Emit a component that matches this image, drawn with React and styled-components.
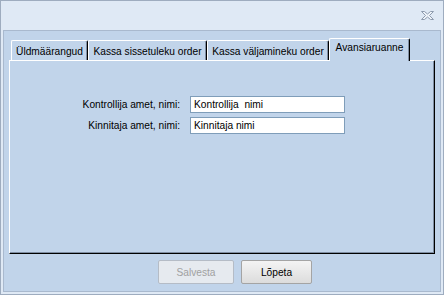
import React from 'react';
import styled, { createGlobalStyle } from 'styled-components';

const GlobalStyle = createGlobalStyle`
  html, body {
    margin: 0;
    padding: 0;
    background: #dfe9f5;
  }
  * {
    box-sizing: border-box;
  }
`;

const tabs = [
  { label: 'Üldmäärangud', width: 77 },
  { label: 'Kassa sissetuleku order', width: 119 },
  { label: 'Kassa väljamineku order', width: 122 },
  { label: 'Avansiaruanne', width: 81 },
];

const fields = [
  { label: 'Kontrollija amet, nimi:', value: 'Kontrollija  nimi' },
  { label: 'Kinnitaja amet, nimi:', value: 'Kinnitaja nimi' },
];

const Window = styled.div`
  width: 444px;
  height: 295px;
  border: 1px solid #9eacbf;
  background: #dfe9f5;
  display: flex;
  flex-direction: column;
  font-family: 'Liberation Sans', Arial, sans-serif;
  font-size: 10.2px;
  color: #000;
`;

const TitleBar = styled.div`
  height: 29px;
  display: flex;
  justify-content: flex-end;
  align-items: flex-start;
  padding: 10px 9px 0 0;
`;

const Client = styled.div`
  flex: 1;
  margin: 0 2px 2px;
  border: 1px solid #a9b9ce;
  background: #c1d4ea;
  padding: 7px 5px 0;
  display: flex;
  flex-direction: column;
`;

const TabRow = styled.div`
  display: flex;
  align-items: flex-end;
  height: 22px;
  padding-left: 2px;
  position: relative;
  z-index: 1;
`;

const Tab = styled.div`
  width: ${(p) => p.$width}px;
  height: ${(p) => (p.$active ? 23 : 20)}px;
  margin-bottom: ${(p) => (p.$active ? -1 : 0)}px;
  border-top: 1px solid #fff;
  border-left: 1px solid #fff;
  border-right: 1px solid #000;
  box-shadow: inset -1px 0 0 #7f8ea3;
  border-radius: 2px 2px 0 0;
  background: #c1d4ea;
  display: flex;
  align-items: ${(p) => (p.$active ? 'flex-start' : 'center')};
  justify-content: center;
  padding-top: ${(p) => (p.$active ? 3 : 1)}px;
  white-space: nowrap;
`;

const Panel = styled.div`
  height: 194px;
  border-top: 1px solid #fff;
  border-left: 1px solid #fff;
  border-right: 1px solid #000;
  border-bottom: 1px solid #000;
  box-shadow: inset -1px -1px 0 #7f8ea3;
  padding: 35px 0 0 0;
`;

const FieldGrid = styled.div`
  display: grid;
  grid-template-columns: 170px 155px;
  column-gap: 10px;
  row-gap: 4px;
  align-items: center;
`;

const Label = styled.div`
  text-align: right;
  white-space: nowrap;
`;

const Input = styled.div`
  height: 17px;
  border: 1px solid #7f9db9;
  background: #fff;
  padding: 0 0 0 3px;
  display: flex;
  align-items: center;
  white-space: pre;
`;

const ButtonRow = styled.div`
  display: flex;
  gap: 7px;
  padding: 6px 0 0 149px;
`;

const Button = styled.div`
  width: ${(p) => p.$width}px;
  height: 24px;
  border: 1px solid ${(p) => (p.$disabled ? '#b5bcc6' : '#a4a4a4')};
  border-radius: 2px;
  background: ${(p) =>
    p.$disabled ? '#e6eaef' : 'linear-gradient(#f4f4f4, #dcdcdc)'};
  color: ${(p) => (p.$disabled ? '#a1a1a1' : '#000')};
  display: flex;
  align-items: center;
  justify-content: center;
`;

const CloseIcon = () => (
  <svg width="13" height="9" viewBox="0 0 13 9">
    <path
      d="M0.5 0.5 H3.5 L6.5 3 L9.5 0.5 H12.5 L8.5 4.5 L12.5 8.5 H9.5 L6.5 6 L3.5 8.5 H0.5 L4.5 4.5 Z"
      fill="#eef3f9"
      stroke="#8d9bae"
      strokeWidth="1"
    />
  </svg>
);

const App = () => (
  <>
    <GlobalStyle />
    <Window>
      <TitleBar>
        <CloseIcon />
      </TitleBar>
      <Client>
        <TabRow>
          {tabs.map((t, i) => (
            <Tab key={t.label} $width={t.width} $active={i === tabs.length - 1}>
              {t.label}
            </Tab>
          ))}
        </TabRow>
        <Panel>
          <FieldGrid>
            {fields.map((f) => (
              <React.Fragment key={f.label}>
                <Label>{f.label}</Label>
                <Input>{f.value}</Input>
              </React.Fragment>
            ))}
          </FieldGrid>
        </Panel>
        <ButtonRow>
          <Button $width={76} $disabled>
            Salvesta
          </Button>
          <Button $width={71}>Lõpeta</Button>
        </ButtonRow>
      </Client>
    </Window>
  </>
);

export default App;
